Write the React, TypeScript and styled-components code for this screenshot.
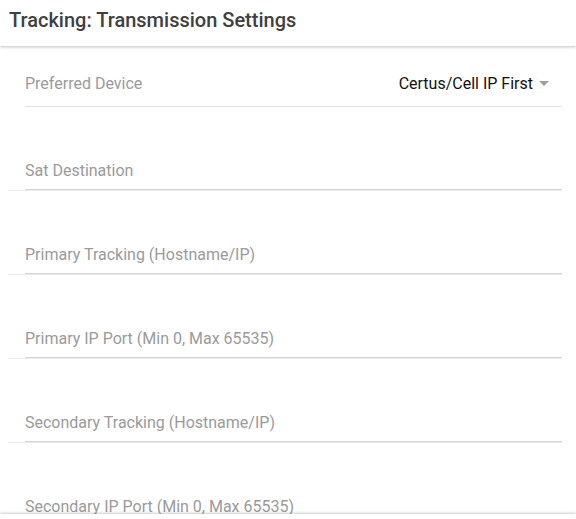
import React from "react";
import styled, { createGlobalStyle } from "styled-components";

const GlobalStyle = createGlobalStyle`
  html, body {
    margin: 0;
    padding: 0;
    background: #fff;
    font-family: Roboto, "Noto Sans", Arial, sans-serif;
  }
`;

const Page = styled.div`
  display: flex;
  flex-direction: column;
  height: 100vh;
  overflow: hidden;
  background: #fff;
`;

const Header = styled.header`
  flex: 0 0 auto;
  height: 39px;
  display: flex;
  align-items: center;
  padding-left: 9px;
  padding-bottom: 7px;
  box-shadow: 0 1px 3px rgba(0, 0, 0, 0.25);
  position: relative;
  z-index: 2;
`;

const Title = styled.h1`
  margin: 0;
  font-size: 20px;
  font-weight: 500;
  color: #404040;
`;

const Content = styled.main`
  flex: 1 1 auto;
  overflow: hidden;
  padding: 15px 14px 0 8px;
`;

const SelectRow = styled.div`
  height: 46px;
  margin-left: 17px;
  display: flex;
  align-items: center;
  justify-content: space-between;
  border-bottom: 1px solid #e2e2e2;
  box-sizing: border-box;
`;

const Label = styled.span`
  font-size: 16px;
  line-height: 20px;
  color: #9a9a9a;
`;

const SelectValue = styled.div`
  display: flex;
  align-items: center;
  gap: 6px;
  padding-right: 13px;
  font-size: 16px;
  color: #111;
`;

const Caret = styled.span`
  width: 0;
  height: 0;
  border-left: 5px solid transparent;
  border-right: 5px solid transparent;
  border-top: 5px solid #a0a0a0;
`;

const InputRow = styled.div`
  height: 84px;
  display: flex;
  align-items: flex-end;
  border-bottom: 1px solid #ececec;
  box-sizing: border-box;
`;

const Field = styled.div`
  flex: 1;
  margin-left: 17px;
  padding: 10px 0 8px;
  border-bottom: 1px solid #d4d4d4;
`;

const Footer = styled.footer`
  flex: 0 0 5px;
  background: #fff;
  box-shadow: 0 -1px 3px rgba(0, 0, 0, 0.2);
  position: relative;
  z-index: 2;
`;

const fields = [
  "Sat Destination",
  "Primary Tracking (Hostname/IP)",
  "Primary IP Port (Min 0, Max 65535)",
  "Secondary Tracking (Hostname/IP)",
  "Secondary IP Port (Min 0, Max 65535)",
];

export default function App() {
  return (
    <Page>
      <GlobalStyle />
      <Header>
        <Title>Tracking: Transmission Settings</Title>
      </Header>
      <Content>
        <SelectRow>
          <Label>Preferred Device</Label>
          <SelectValue>
            Certus/Cell IP First
            <Caret />
          </SelectValue>
        </SelectRow>
        {fields.map((f) => (
          <InputRow key={f}>
            <Field>
              <Label>{f}</Label>
            </Field>
          </InputRow>
        ))}
      </Content>
      <Footer />
    </Page>
  );
}
